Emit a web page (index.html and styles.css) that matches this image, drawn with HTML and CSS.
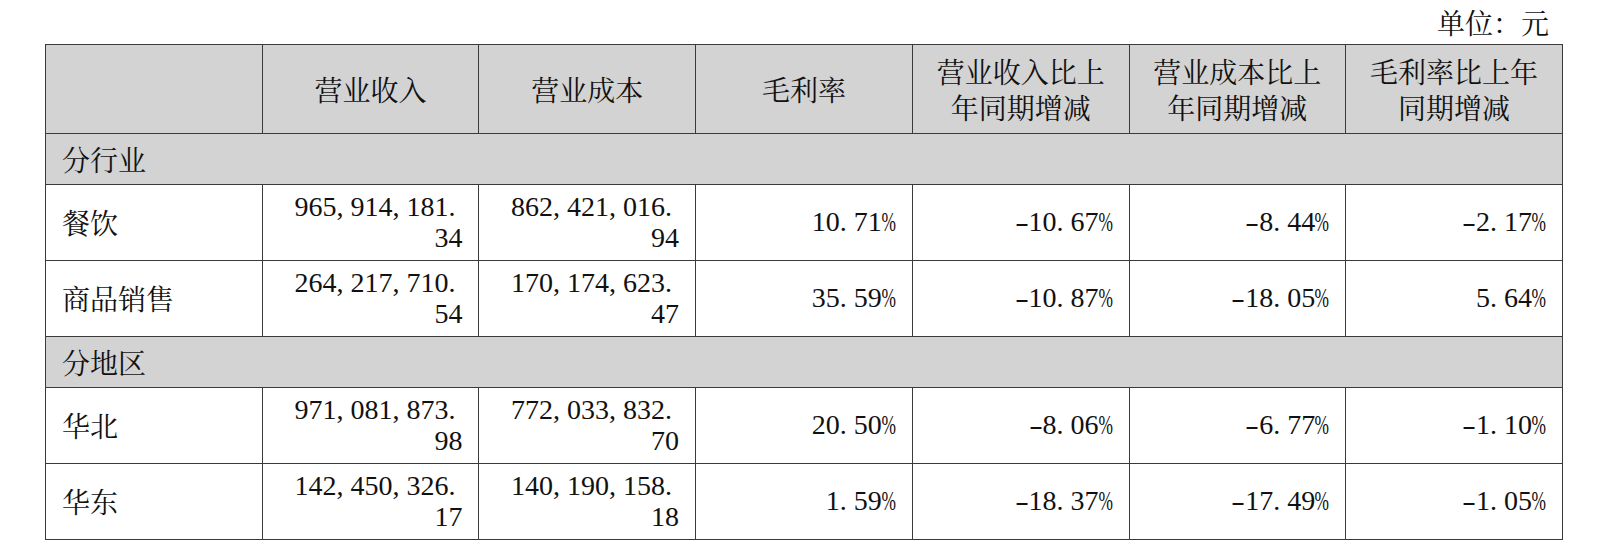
FILE: index.html
```html
<!DOCTYPE html>
<html lang="zh-CN">
<head>
<meta charset="utf-8">
<title>分行业、分地区营业情况</title>
<link rel="stylesheet" href="styles.css">
</head>
<body>
<div class="page">
  <div class="unit">单位：元</div>
  <table class="report">
    <colgroup>
      <col><col><col><col><col><col><col>
    </colgroup>
    <thead>
      <tr class="head">
        <th></th>
        <th>营业收入</th>
        <th>营业成本</th>
        <th>毛利率</th>
        <th>营业收入比上年同期增减</th>
        <th>营业成本比上年同期增减</th>
        <th>毛利率比上年同期增减</th>
      </tr>
    </thead>
    <tbody>
      <tr class="group"><td colspan="7">分行业</td></tr>
      <tr class="data">
        <td class="name">餐饮</td>
        <td class="num"><span class="l">965<i>,</i>914<i>,</i>181<i>.</i></span><span class="l">34</span></td>
        <td class="num"><span class="l">862<i>,</i>421<i>,</i>016<i>.</i></span><span class="l">94</span></td>
        <td class="num">10<i>.</i>71<b>%</b></td>
        <td class="num"><em>-</em>10<i>.</i>67<b>%</b></td>
        <td class="num"><em>-</em>8<i>.</i>44<b>%</b></td>
        <td class="num"><em>-</em>2<i>.</i>17<b>%</b></td>
      </tr>
      <tr class="data">
        <td class="name">商品销售</td>
        <td class="num"><span class="l">264<i>,</i>217<i>,</i>710<i>.</i></span><span class="l">54</span></td>
        <td class="num"><span class="l">170<i>,</i>174<i>,</i>623<i>.</i></span><span class="l">47</span></td>
        <td class="num">35<i>.</i>59<b>%</b></td>
        <td class="num"><em>-</em>10<i>.</i>87<b>%</b></td>
        <td class="num"><em>-</em>18<i>.</i>05<b>%</b></td>
        <td class="num">5<i>.</i>64<b>%</b></td>
      </tr>
      <tr class="group"><td colspan="7">分地区</td></tr>
      <tr class="data">
        <td class="name">华北</td>
        <td class="num"><span class="l">971<i>,</i>081<i>,</i>873<i>.</i></span><span class="l">98</span></td>
        <td class="num"><span class="l">772<i>,</i>033<i>,</i>832<i>.</i></span><span class="l">70</span></td>
        <td class="num">20<i>.</i>50<b>%</b></td>
        <td class="num"><em>-</em>8<i>.</i>06<b>%</b></td>
        <td class="num"><em>-</em>6<i>.</i>77<b>%</b></td>
        <td class="num"><em>-</em>1<i>.</i>10<b>%</b></td>
      </tr>
      <tr class="data">
        <td class="name">华东</td>
        <td class="num"><span class="l">142<i>,</i>450<i>,</i>326<i>.</i></span><span class="l">17</span></td>
        <td class="num"><span class="l">140<i>,</i>190<i>,</i>158<i>.</i></span><span class="l">18</span></td>
        <td class="num">1<i>.</i>59<b>%</b></td>
        <td class="num"><em>-</em>18<i>.</i>37<b>%</b></td>
        <td class="num"><em>-</em>17<i>.</i>49<b>%</b></td>
        <td class="num"><em>-</em>1<i>.</i>05<b>%</b></td>
      </tr>
    </tbody>
  </table>
</div>
</body>
</html>
```

FILE: styles.css
```css
html, body {
  margin: 0;
  padding: 0;
  background: #ffffff;
}

body {
  font-family: "Noto Serif CJK SC", "Liberation Serif", "Noto Sans CJK SC", serif;
  font-size: 28px;
  color: #111111;
}

.page {
  width: 1517px;
  padding-left: 45px;
}

.unit {
  height: 44px;
  line-height: 44px;
  text-align: right;
  padding-right: 13px;
  box-sizing: border-box;
  font-family: "Noto Serif CJK SC", "Noto Sans CJK SC", serif;
}

.report {
  width: 1518px;
  border-collapse: collapse;
  table-layout: fixed;
}

.report th,
.report td {
  border: 1px solid #3a3a3a;
  padding: 0 16px;
  font-weight: normal;
  vertical-align: middle;
}

.head th {
  height: 88px;
  background: #d3d3d3;
  text-align: center;
  line-height: 36.5px;
  font-family: "Noto Serif CJK SC", "Noto Sans CJK SC", serif;
}

.group td {
  height: 50px;
  background: #d3d3d3;
  text-align: left;
  line-height: 30px;
  font-family: "Noto Serif CJK SC", "Noto Sans CJK SC", serif;
}

.data td {
  height: 75px;
  line-height: 30.5px;
}

.name {
  text-align: left;
  font-family: "Noto Serif CJK SC", "Noto Sans CJK SC", serif;
}

.num {
  text-align: right;
  font-family: "Liberation Serif", serif;
  padding-right: 16px;
}

.num .l {
  display: block;
}

.num i {
  font-style: normal;
  display: inline-block;
  width: 0.5em;
  text-align: left;
}

.num b {
  font-weight: normal;
  display: inline-block;
  width: 0.5em;
  text-align: right;
}

.num b {
  transform: scaleX(0.62);
  transform-origin: 100% 50%;
  width: 0.5em;
  direction: rtl;
}

.num em {
  font-style: normal;
  display: inline-block;
  width: 0.5em;
  text-align: center;
  transform: scaleX(1.5);
}
```
